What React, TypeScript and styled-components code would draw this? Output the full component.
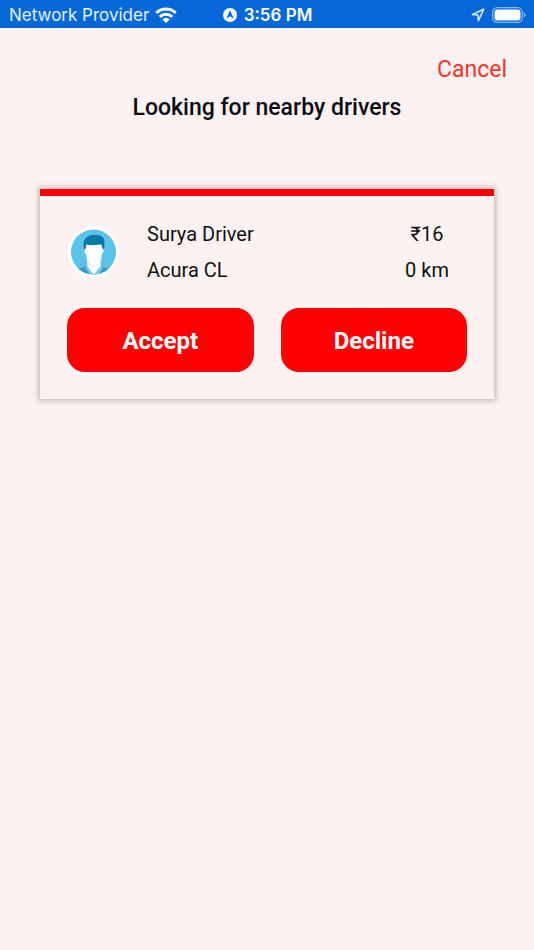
import React from "react";
import styled, { createGlobalStyle } from "styled-components";

const GlobalStyle = createGlobalStyle`
  *, *::before, *::after { box-sizing: border-box; }
  body { margin: 0; background: #fcf2f1; color: #111; font-family: Roboto, sans-serif; }
  h1, p { margin: 0; }
  button { font-family: inherit; cursor: pointer; }
`;

const Screen = styled.div`
  min-height: 100vh;
  display: flex;
  flex-direction: column;
`;

const StatusBar = styled.header`
  display: grid;
  grid-template-columns: 1fr auto 1fr;
  align-items: center;
  height: 28px;
  padding: 2px 8px 0 9px;
  background: #0468d9;
  color: #fff;
  font-family: Inter, sans-serif;
  font-size: 17px;
  line-height: 24px;
  white-space: nowrap;
`;

const StatusGroup = styled.div<{ $end?: boolean; $strong?: boolean }>`
  display: flex;
  align-items: center;
  justify-content: ${(p) => (p.$end ? "flex-end" : "flex-start")};
  gap: ${(p) => (p.$strong || p.$end ? "7px" : "6px")};
  color: ${(p) => (p.$strong ? "#fff" : "#e6f0fc")};
  font-weight: ${(p) => (p.$strong ? 600 : 400)};
`;

const Main = styled.main`
  display: flex;
  flex-direction: column;
  padding: 25px 27px 0;
`;

const CancelButton = styled.button`
  align-self: flex-end;
  padding: 0;
  border: 0;
  background: none;
  color: #fa3428;
  font-size: 23px;
  font-weight: 400;
  line-height: 34px;
`;

const Title = styled.h1`
  margin-top: 4px;
  text-align: center;
  color: #0b0b12;
  font-size: 23px;
  font-weight: 500;
  line-height: 34px;
`;

const OfferCard = styled.article`
  margin: 64px 13px 0;
  padding: 20px 27px 27px;
  border-top: 7px solid #f00;
  box-shadow: 0 0 5px 2px rgba(60, 40, 40, 0.26);
  background: #fcf2f1;
`;

const OfferInfo = styled.div`
  display: grid;
  grid-template-columns: 53px 1fr 80px;
  align-items: center;
  column-gap: 27px;
`;

const Lines = styled.div<{ $center?: boolean }>`
  color: #111;
  font-size: 20px;
  line-height: 36px;
  text-align: ${(p) => (p.$center ? "center" : "left")};
`;

const Actions = styled.div`
  display: grid;
  grid-template-columns: 1fr 1fr;
  gap: 27px;
  margin-top: 20px;
`;

const ActionButton = styled.button`
  height: 64px;
  padding: 2px 0 0;
  border: 0;
  border-radius: 18px;
  background: #f00;
  color: #fff;
  font-size: 24px;
  font-weight: 700;
`;

const Avatar = styled.svg`
  display: block;
`;

const WifiIcon = () => (
  <svg width="22" height="16" viewBox="0 0 22 16" fill="none" stroke="#fff" strokeWidth="3" aria-hidden="true">
    <path d="M1.3 5.9a14 14 0 0 1 19.4 0" />
    <path d="M4.8 9.9a8.8 8.8 0 0 1 12.4 0" />
    <path d="M11 16 7.4 12.4a5 5 0 0 1 7.2 0z" fill="#fff" stroke="none" />
  </svg>
);

const NavigationBadge = () => (
  <svg width="14" height="14" viewBox="0 0 14 14" aria-hidden="true">
    <circle cx="7" cy="7" r="7" fill="#fff" />
    <path d="M7 2.2 10.8 10.8 7 8.2 3.2 10.8z" fill="#0468d9" />
  </svg>
);

const LocationIcon = () => (
  <svg width="14" height="14" viewBox="0 0 14 14" fill="none" stroke="#e6f0fc" strokeWidth="1.5" strokeLinejoin="round" aria-hidden="true">
    <path d="M12.7 1.2 7.4 12.7 6.9 7.1 1.3 6.6z" />
  </svg>
);

const BatteryIcon = () => (
  <svg width="34" height="16" viewBox="0 0 34 16" aria-hidden="true">
    <rect x=".7" y=".7" width="29.6" height="14.6" rx="4.6" fill="none" stroke="#84b5ef" strokeWidth="1.3" />
    <rect x="2.5" y="2.5" width="26" height="11" rx="3" fill="#fff" />
    <path d="M31.8 5.3q1.8.8 1.8 2.7t-1.8 2.7z" fill="#84b5ef" />
  </svg>
);

const DriverAvatar = () => (
  <Avatar width="53" height="53" viewBox="0 0 53 53" role="img" aria-label="Driver avatar">
    <defs>
      <clipPath id="avatar-disc"><circle cx="26.5" cy="26" r="22.5" /></clipPath>
    </defs>
    <circle cx="26.5" cy="26" r="26" fill="#fff" />
    <g clipPath="url(#avatar-disc)">
      <path d="M0 0h53v53H0z" fill="#5bc3e8" />
      <path d="M7 49 11 43 20 40 26.5 48 34 40 42 43 46 49v4H7z" fill="#349ccc" />
      <path d="M20 31h14v10l-7 8-7-8z" fill="#e5e6e8" />
      <path d="M17.8 26Q14.8 17 18 13q3-4 8-4l3-.3q8 0 8.5 7 .5 5-2 10z" fill="#087aa5" />
      <path d="M19.3 18.500Q23 19.500 27 19t7.500-.5l.8 4q1.600 0 1.200 2.500-.5 3-1.800 3.500l-.7 5q-2.500 5.500-7 6-4.500-.5-7-6l-.7-5q-1.600-.5-1.900-3.500-.3-2.500 1.400-2.500z" fill="#fff" />
      <path d="m18.500 41 1.500-2 6.500 9-2.500 3zM34 39l2 2-5 9-4.500-2z" fill="#77cbea" />
      <path d="M21.500 38.500 27 40l5.500-1.500 1 1.500-7 9-6-9z" fill="#fff" />
    </g>
  </Avatar>
);

export default function App() {
  return (
    <>
      <GlobalStyle />
      <Screen>
        <StatusBar>
          <StatusGroup>
            <span>Network Provider</span>
            <WifiIcon />
          </StatusGroup>
          <StatusGroup $strong>
            <NavigationBadge />
            <span>3:56 PM</span>
          </StatusGroup>
          <StatusGroup $end>
            <LocationIcon />
            <BatteryIcon />
          </StatusGroup>
        </StatusBar>
        <Main>
          <CancelButton type="button">Cancel</CancelButton>
          <Title>Looking for nearby drivers</Title>
          <OfferCard>
            <OfferInfo>
              <DriverAvatar />
              <Lines>
                <p>Surya Driver</p>
                <p>Acura CL</p>
              </Lines>
              <Lines $center>
                <p>₹16</p>
                <p>0 km</p>
              </Lines>
            </OfferInfo>
            <Actions>
              <ActionButton type="button">Accept</ActionButton>
              <ActionButton type="button">Decline</ActionButton>
            </Actions>
          </OfferCard>
        </Main>
      </Screen>
    </>
  );
}
